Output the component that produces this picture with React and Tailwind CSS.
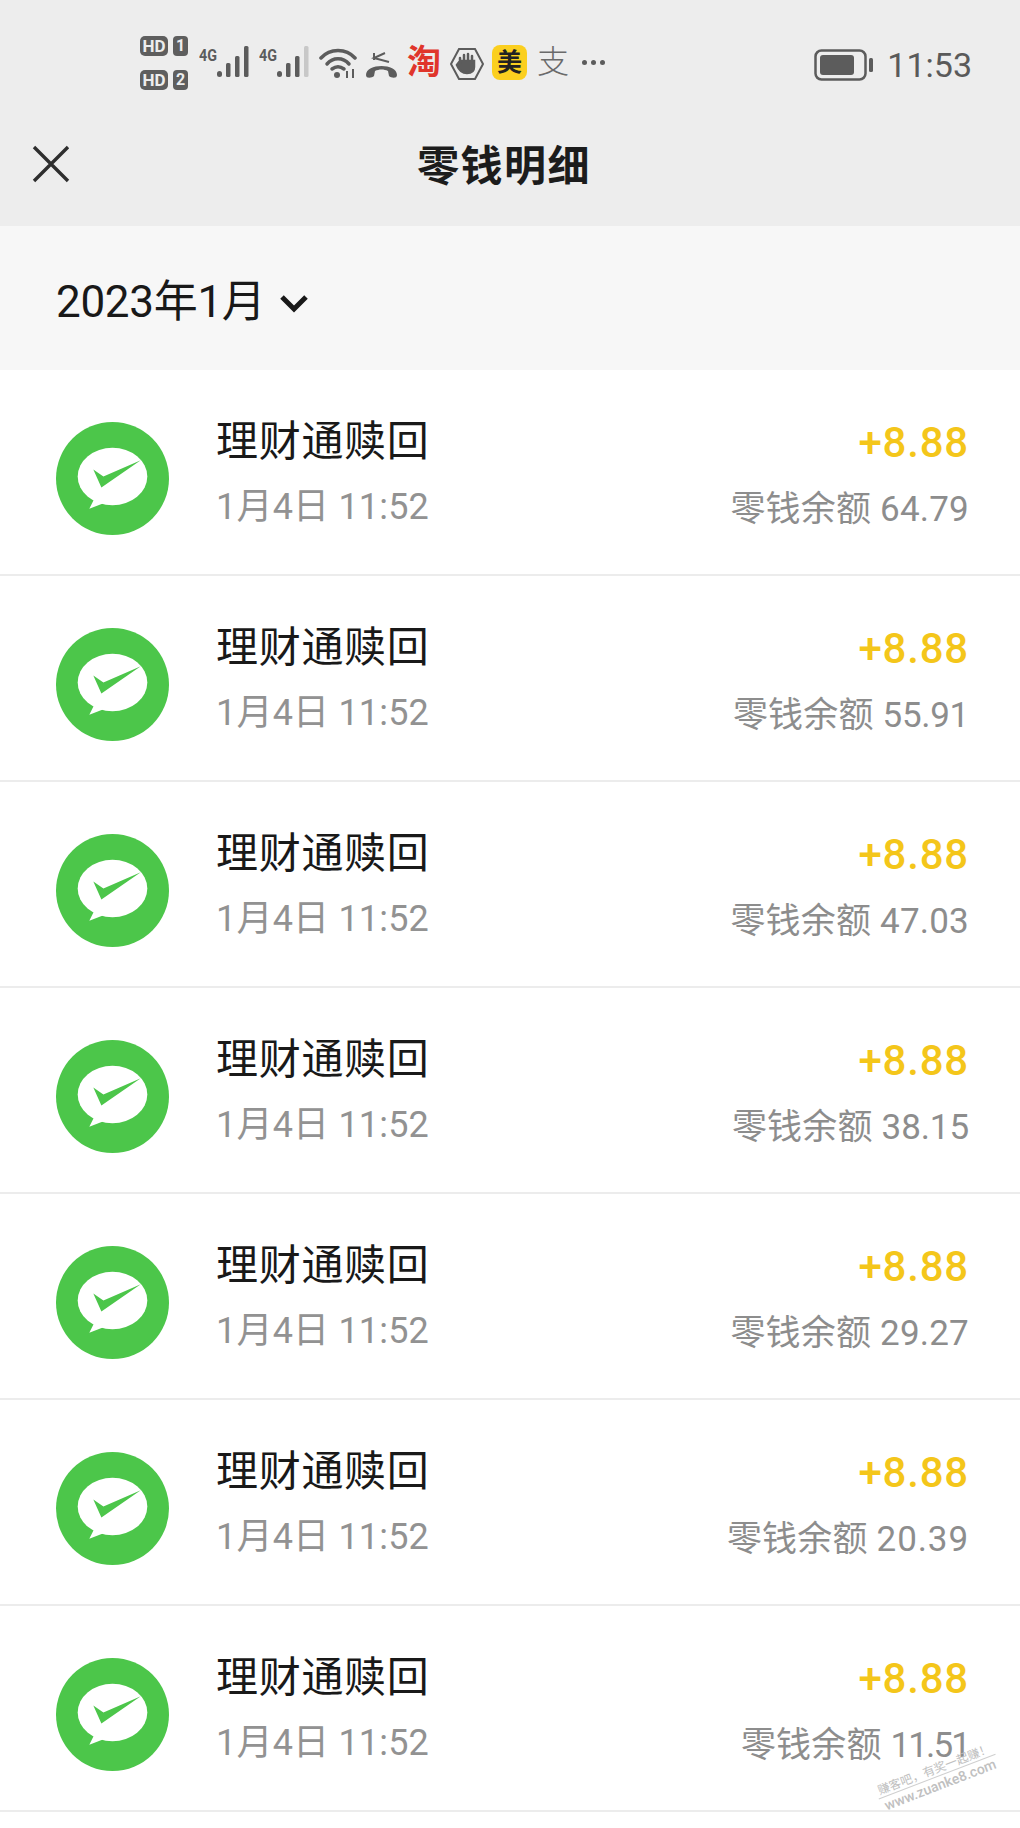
const FONT = { fontFamily: '"Roboto","Noto Sans CJK SC",sans-serif' };

function WeChatPay() {
  return (
    <svg viewBox="17 22 112 112" className="w-[113px] h-[113px] shrink-0">
      <circle cx="73" cy="78" r="56" fill="#4cc64a" />
      <ellipse cx="73" cy="76" rx="34.5" ry="28.5" fill="#fff" />
      <path d="M56 96 L50 108 L68 101 Z" fill="#fff" />
      <path d="M54 69 L64 76 L101 60 L62 87 Z" fill="#4cc64a" />
    </svg>
  );
}

function Signal({ dim }) {
  return (
    <svg viewBox="0 0 52 34" className="w-[52px] h-[34px]">
      <text x="0" y="16" fontSize="17" fontWeight="700" fill="#5c5c5c" fontFamily="Roboto" textLength="18" lengthAdjust="spacingAndGlyphs">4G</text>
      <rect x="18" y="26" width="5" height="6" rx="2.5" fill="#5c5c5c" />
      <rect x="27" y="18" width="4.5" height="14" rx="1.5" fill="#5c5c5c" />
      <rect x="36" y="11" width="4.5" height="21" rx="1.5" fill="#5c5c5c" />
      <rect x="45" y="1" width="4.5" height="31" rx="1.5" fill={dim ? "#c8c8c8" : "#5c5c5c"} />
    </svg>
  );
}

function HdBadge({ n }) {
  return (
    <div className="flex items-center gap-[5px]">
      <span className="w-[28px] h-[20px] rounded-[5px] bg-[#5e5e5e] text-[#ededed] text-[17px] leading-[20px] font-bold text-center">HD</span>
      <span className="w-[15px] h-[20px] rounded-[4px] bg-[#5e5e5e] text-[#ededed] text-[16px] leading-[20px] font-bold text-center">{n}</span>
    </div>
  );
}

function Row({ balance, spacing }) {
  return (
    <div className="h-[206px] bg-white border-b-2 border-[#ececec] pl-[56px] pr-[51px] flex items-center">
      <div className="mt-[13px] shrink-0 flex">
        <WeChatPay />
      </div>
      <div className="ml-[47px] flex-1 self-start pt-[43px]">
        <div className="text-[42px] leading-[58px] text-[#191919] tracking-[0.7px]">理财通赎回</div>
        <div className="text-[36px] leading-[50px] mt-[11px] text-[#929292] tracking-[0.2px]">1月4日 11:52</div>
      </div>
      <div className="self-start pt-[44px] text-right">
        <div className="text-[42px] leading-[58px] font-medium text-[#f4c61a] tracking-[0.8px]">+8.88</div>
        <div className="text-[35px] leading-[50px] mt-[13px] text-[#8d8d8d] tracking-[0.2px]">
          零钱余额 <span style={{ letterSpacing: spacing }}>{balance}</span>
        </div>
      </div>
    </div>
  );
}

export default function App() {
  const balances = [
    ["64.79", "0.2px"],
    ["55.91", "-0.3px"],
    ["47.03", "0.2px"],
    ["38.15", "-0.1px"],
    ["29.27", "0.2px"],
    ["20.39", "0.9px"],
    ["11.51", "-1.9px"],
  ];
  return (
    <div className="w-[1020px] h-[1828px] bg-white overflow-hidden relative" style={FONT}>
      <div className="h-[226px] bg-[#ededed]">
        <div className="h-[110px] flex items-start pl-[140px] pr-[48px] pt-[36px]">
          <div className="flex flex-col gap-[14px] mr-[11px]">
            <HdBadge n="1" />
            <HdBadge n="2" />
          </div>
          <div className="flex items-start mt-[9px]">
            <Signal />
            <div className="w-[8px]" />
            <Signal dim />
            <svg viewBox="0 0 40 32" className="w-[40px] h-[32px] ml-[8px] mt-[2px]">
              <g fill="none" stroke="#5c5c5c" strokeWidth="3.5" strokeLinecap="round">
                <path d="M2 11 C11 1 27 1 36 11" />
                <path d="M8 17 C14 10 24 10 30 17" />
                <path d="M13 22 C17 19 21 19 25 22" />
              </g>
              <circle cx="18" cy="28" r="3" fill="#5c5c5c" />
              <path d="M28 24 V31 M34 22 V31" stroke="#5c5c5c" strokeWidth="2" />
            </svg>
            <svg viewBox="0 0 33 28" className="w-[33px] h-[28px] ml-[6px] mt-[6px]">
              <path d="M9 2 V9 M20 2 L9 7 L24 11" fill="none" stroke="#5c5c5c" strokeWidth="2" />
              <path d="M1 24 C1 12 32 12 32 24 C32 28 26 27 24 25 L23 20 C19 18 14 18 10 20 L9 25 C7 27 1 28 1 24 Z" fill="#5c5c5c" />
            </svg>
            <span className="text-[34px] leading-[34px] font-bold text-[#e0352b] ml-[9px] w-[35px]">淘</span>
            <svg viewBox="0 0 34 34" className="w-[34px] h-[34px] ml-[8px] mt-[2px]">
              <path d="M9 2 H25 L33 17 L25 32 H9 L1 17 Z" fill="none" stroke="#5c5c5c" strokeWidth="2" />
              <path d="M10 16 V11 M14 15 V8 M18 15 V7 M22 15 V9 M10 14 H24 V20 C24 25 21 26 17 26 C13 26 9 23 7 18 Z" fill="#5c5c5c" stroke="#5c5c5c" strokeWidth="2.5" strokeLinecap="round" />
            </svg>
            <span className="w-[35px] h-[35px] rounded-[8px] bg-[#fbcf1f] text-[#222] text-[25px] leading-[35px] font-bold text-center ml-[8px]">美</span>
            <span className="text-[32px] leading-[34px] text-[#6a6a6a] ml-[10px] w-[32px] font-light">支</span>
            <div className="flex items-center gap-[4px] ml-[13px] mt-[15px]">
              <span className="w-[5px] h-[5px] rounded-full bg-[#5c5c5c]" />
              <span className="w-[5px] h-[5px] rounded-full bg-[#5c5c5c]" />
              <span className="w-[5px] h-[5px] rounded-full bg-[#5c5c5c]" />
            </div>
          </div>
          <div className="flex-1" />
          <div className="flex items-center mt-[9px]">
            <svg viewBox="0 0 60 32" className="w-[60px] h-[32px]">
              <rect x="1.5" y="1.5" width="50" height="29" rx="6" fill="none" stroke="#5c5c5c" strokeWidth="2.5" />
              <rect x="6" y="6" width="34" height="20" rx="3" fill="#5c5c5c" />
              <rect x="55" y="9" width="4" height="14" rx="1.5" fill="#5c5c5c" />
            </svg>
            <span className="text-[34px] leading-[40px] text-[#5a5a5a] ml-[13px]">11:53</span>
          </div>
        </div>
        <div className="h-[116px] relative flex items-center justify-center pr-[12px] pb-[3px]">
          <svg viewBox="0 0 38 38" className="absolute left-[32px] top-[35px] w-[38px] h-[38px]">
            <path d="M2 2 L36 36 M36 2 L2 36" stroke="#2e2e2e" strokeWidth="3.4" />
          </svg>
          <span className="text-[42px] leading-[56px] font-bold text-[#1c1c1c] tracking-[1.4px]">零钱明细</span>
        </div>
      </div>
      <div className="h-[144px] bg-[#f7f7f7] pl-[56px] flex items-center pt-[8px]">
        <span className="text-[44px] leading-[56px] text-[#191919] tracking-[-0.3px]">2023年1月</span>
        <svg viewBox="0 0 30 20" className="w-[30px] h-[20px] ml-[13px] mt-[2px]">
          <path d="M3 4 L15 16 L27 4" fill="none" stroke="#191919" strokeWidth="5" />
        </svg>
      </div>
      {balances.map(([b, s]) => (
        <Row key={b} balance={b} spacing={s} />
      ))}
      <div className="absolute left-[875px] top-[1763px] w-[125px] -rotate-[21deg] text-center leading-none">
        <div className="text-[12px] text-[#c0c0c0] border-b border-[#cfcfcf] pb-[1px]">赚客吧，有奖一起赚！</div>
        <div className="text-[14px] text-[#c0c0c0] font-medium pt-[1px]">www.zuanke8.com</div>
      </div>
    </div>
  );
}
